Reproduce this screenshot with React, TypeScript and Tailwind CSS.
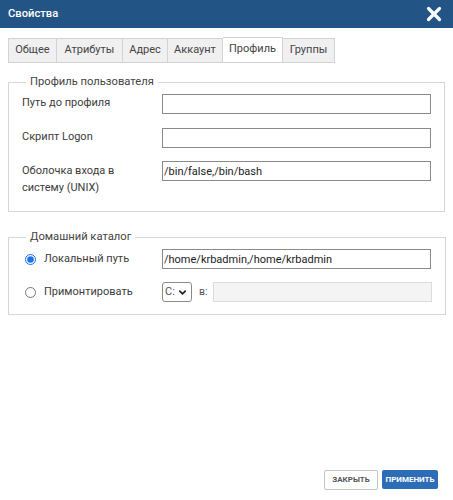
import { ChevronDown } from "lucide-react"

const tabs = [
  { label: "Общее", w: "w-[49px]" },
  { label: "Атрибуты", w: "w-[66px]" },
  { label: "Адрес", w: "w-[45px]" },
  { label: "Аккаунт", w: "w-[55px]" },
  { label: "Профиль", w: "w-[60px]", active: true },
  { label: "Группы", w: "w-[52px]" },
]

function TextField({ value = "" }: { value?: string }) {
  return (
    <input
      type="text"
      defaultValue={value}
      className="h-[20px] w-[269px] border border-[#8a8a8a] bg-white px-[1px] text-[11px] text-[#222] outline-none"
    />
  )
}

export default function App() {
  return (
    <div className="flex h-[500px] w-[453px] flex-col bg-white font-['Roboto',sans-serif] text-[11px] text-[#3c3c3c]">
      {/* Title bar */}
      <div className="flex h-[28px] items-center justify-between bg-[#235486] pl-[8px] pr-[11px]">
        <span className="text-[11.2px] font-medium text-white">Свойства</span>
        <button className="text-white">
          <svg width="16" height="16" viewBox="0 0 16 16">
            <path d="M2.5 2.5 L13.5 13.5 M13.5 2.5 L2.5 13.5" stroke="currentColor" strokeWidth="3.2" strokeLinecap="round" />
          </svg>
        </button>
      </div>

      {/* Tabs */}
      <div className="mt-[9px] flex items-end pl-[8px]">
        {tabs.map((t, i) => (
          <div
            key={t.label}
            className={`${t.w} flex items-center justify-center border-y border-r border-[#d3d3d3] ${
              i === 0 ? "border-l" : ""
            } ${t.active ? "h-[26px] bg-white pb-[2px]" : "h-[25px] bg-[#f0f0f0]"} text-[11px] text-[#444]`}
          >
            {t.label}
          </div>
        ))}
      </div>

      {/* User profile */}
      <fieldset className="ml-[8px] mr-[9px] mt-[11px] border border-[#d6d6d6] pb-[15px] pl-[13px] pr-[13px]">
        <legend className="ml-[4px] px-[4px] text-[11.2px] leading-[16px] text-[#444]">Профиль пользователя</legend>
        <div className="mt-[4px] flex flex-col gap-[14px]">
          <div className="flex items-start">
            <span className="w-[140px] leading-[17px]">Путь до профиля</span>
            <TextField />
          </div>
          <div className="flex items-start">
            <span className="w-[140px] leading-[17px]">Скрипт Logon</span>
            <TextField />
          </div>
          <div className="-mt-[1px] flex items-start">
            <span className="w-[140px] pt-[1px] leading-[17px]">
              Оболочка входа в
              <br />
              систему (UNIX)
            </span>
            <TextField value="/bin/false,/bin/bash" />
          </div>
        </div>
      </fieldset>

      {/* Home directory */}
      <fieldset className="ml-[8px] mr-[9px] mt-[17px] border border-[#d6d6d6] pb-[12px] pl-[16px] pr-[13px]">
        <legend className="ml-[1px] px-[4px] text-[11.2px] leading-[16px] text-[#444]">Домашний каталог</legend>
        <div className="mt-[4px] flex flex-col gap-[13px]">
          <div className="flex items-center">
            <label className="flex w-[137px] items-center gap-[8px]">
              <input type="radio" name="home" defaultChecked className="m-0 h-[11px] w-[11px] accent-[#1a73e8]" />
              <span>Локальный путь</span>
            </label>
            <TextField value="/home/krbadmin,/home/krbadmin" />
          </div>
          <div className="flex items-center">
            <label className="flex w-[137px] items-center gap-[8px]">
              <input type="radio" name="home" className="m-0 h-[11px] w-[11px] accent-[#1a73e8]" />
              <span>Примонтировать</span>
            </label>
            <div className="relative h-[20px] w-[30px] rounded-[3px] border border-[#8a8a8a]">
              <select className="h-full w-full appearance-none bg-transparent pl-[2px] text-[11px] text-[#555] outline-none">
                <option>C:</option>
              </select>
              <ChevronDown size={11} strokeWidth={3.5} className="pointer-events-none absolute right-[3px] top-[4px] text-[#222]" />
            </div>
            <span className="ml-[7px] w-[14px] text-[10.5px] text-[#555]">в:</span>
            <input
              type="text"
              disabled
              className="h-[20px] w-[219px] border border-[#dcdcdc] bg-[#f4f4f4] outline-none"
            />
          </div>
        </div>
      </fieldset>

      {/* Footer buttons */}
      <div className="mt-auto flex justify-end gap-[4px] pb-[10px] pr-[15px]">
        <button className="h-[20px] w-[54px] rounded-[2px] border border-[#c4c4c4] bg-white text-[8px] font-bold text-[#555]">
          ЗАКРЫТЬ
        </button>
        <button className="h-[19px] w-[56px] rounded-[2px] bg-[#2d6db5] text-[8px] font-bold text-white">
          ПРИМЕНИТЬ
        </button>
      </div>
    </div>
  )
}
